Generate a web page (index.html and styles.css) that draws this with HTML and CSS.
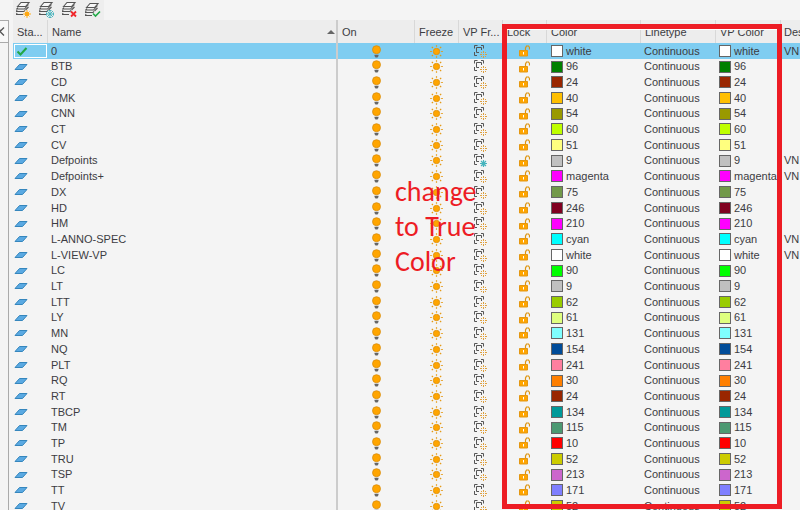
FILE: index.html
```html
<!DOCTYPE html>
<html lang="en">
<head>
<meta charset="utf-8">
<title>Layers</title>
<link rel="stylesheet" href="styles.css">
</head>
<body>
<svg class="defs" aria-hidden="true">
  <symbol id="sheets" viewBox="0 0 16 17">
    <g fill="none" stroke="#555" stroke-width="1.100">
      <path d="M1 9l-.5 1.500H8l1-1M1 12l-.5 1.500H7"/>
      <path d="M2 6.500L.8 8H8.500l4-4.500"/>
      <path d="M9.500 9l3-3"/>
      <path d="M1.500 5.500L5 1.500h8L9.500 5.500z" fill="#f8f8f8"/>
    </g>
  </symbol>
  <symbol id="layer" viewBox="0 0 14 8"><path d="M1 6.500L5.500 1.500h7.500L8.500 6.500z" fill="#5aa9e2" stroke="#3586bd"/></symbol>
  <symbol id="check" viewBox="0 0 12 9"><path d="M1.500 4.500l3 3L10.500 1" fill="none" stroke="#22a845" stroke-width="2"/></symbol>
  <symbol id="bulb" viewBox="0 0 9 13">
    <circle cx="4.500" cy="4.700" r="4" fill="#ffa500" stroke="#d88d0c" stroke-width=".8"/>
    <path d="M2.500 9.800h4v1.200l-1 1.500h-2l-1-1.500z" fill="#666"/>
  </symbol>
  <symbol id="sun" viewBox="0 0 13 13">
    <circle cx="6.500" cy="6.500" r="3.200" fill="#ffa500" stroke="#db9010" stroke-width=".8"/>
    <path d="M6.500 .2v1.600M6.500 11.200v1.600M.2 6.500h1.600M11.200 6.500h1.600M1.800 1.800l1.200 1.200M10 10l1.200 1.200M11.200 1.800L10 3M3 10l-1.200 1.200" stroke="#e59a16" stroke-width="1.200"/>
  </symbol>
  <symbol id="vp" viewBox="0 0 13 13">
    <path d="M.5 3.500v-3h3M7 .5h2.500v3M.5 7v3.500h2.500M5 7.500H2.500v-5h5V5" fill="none" stroke="#555"/>
  </symbol>
  <symbol id="spark" viewBox="0 0 7 7"><path d="M3.500 0v2M3.500 5v2M0 3.500h2M5 3.500h2M1 1l1 1M5 5l1 1M6 1L5 2M2 5L1 6" stroke="#dfa03c"/><path d="M3 3.500h1" stroke="#dfa03c"/></symbol>
  <symbol id="flake" viewBox="0 0 7 7"><path d="M3.500 0v7M0 3.500h7M1 1l5 5M6 1L1 6" stroke="#45b3bc" stroke-width="1.200"/></symbol>
  <symbol id="lock" viewBox="0 0 11 12">
    <path d="M6.500 5.500V3L7.500 1h2l1 1.500v2" fill="none" stroke="#dd940f" stroke-width="1.200"/>
    <path d="M.5 5.500h8v5.500h-8z" fill="#ffa500" stroke="#e39712"/><path d="M4.500 7v2.500" stroke="#fff"/>
  </symbol>
</svg>

<div class="toolbar">
  <button aria-label="New layer"><svg><use href="#sheets" width="16" height="17"/><path d="M11 9v8M7 13h8M8.500 10.500l5 5M13.500 10.500l-5 5" stroke="#ffb01f"/><circle cx="11" cy="13" r="2.200" fill="#ffa812"/></svg></button>
  <button aria-label="New frozen layer"><svg><use href="#sheets" width="16" height="17"/><path d="M11 9v8M7 13h8M8 10l6 6M14 10l-6 6M9.500 9.500h3M9.500 16.500h3M7.500 11.500v3M14.500 11.500v3" stroke="#4bb5be"/></svg></button>
  <button aria-label="Delete layer"><svg><use href="#sheets" width="16" height="17"/><path d="M9 10.500l5 5M14 10.500l-5 5" stroke="#f0262b" stroke-width="1.800"/></svg></button>
  <button aria-label="Set current"><svg><use href="#sheets" y="1" width="16" height="17"/><path d="M8 12.500l2.500 2.500L15 10.500" fill="none" stroke="#22aa48" stroke-width="1.600"/></svg></button>
</div>

<main class="manager">
  <aside class="side">
    <button class="close" aria-label="Close"><svg viewBox="0 0 5 9"><path d="M-1 .5L0 4.500L4 8.500M4 .5L0 4.500" fill="none" stroke="#555" stroke-width="1.300"/></svg></button>
  </aside>
  <div class="list">
    <table>
      <colgroup>
        <col class="c-status"><col class="c-name"><col class="c-on"><col class="c-mid"><col class="c-mid"><col class="c-mid"><col class="c-color"><col class="c-line"><col class="c-vp"><col>
      </colgroup>
      <thead>
        <tr><th>Sta...</th><th class="sorted">Name</th><th>On</th><th>Freeze</th><th>VP Fr...</th><th>Lock</th><th>Color</th><th>Linetype</th><th>VP Color</th><th>Des</th></tr>
      </thead>
      <tbody id="layers"></tbody>
    </table>
    <div class="frame"></div>
    <p class="note">change<br>to True<br>Color</p>
  </div>
</main>
<script src="layers.js"></script>
</body>
</html>
```
FILE: styles.css
```css
* { box-sizing: border-box; }
body {
  margin: 0;
  height: 100vh;
  overflow: hidden;
  display: flex;
  flex-direction: column;
  background: #f4f4f4;
  color: #3c3c42;
  font: 11px/15px "Liberation Sans", Arial, sans-serif;
}
.defs { position: absolute; width: 0; height: 0; }
svg { display: block; }
button { border: 0; padding: 0; background: none; }

.toolbar {
  display: flex;
  gap: 7px;
  flex: none;
  align-self: flex-start;
  height: 20px;
  margin-left: 13px;
  padding: 1px 3px;
  background: #eee;
}
.toolbar svg { width: 16px; height: 18px; }

.manager { flex: 1; min-height: 0; display: flex; gap: 4px; }
.side { width: 9px; border-top: 1px solid #aaa; border-right: 1px solid #aaa; }
.close {
  display: block;
  width: 100%;
  height: 22px;
  border-bottom: 1px solid #aaa;
  background: #f8f8f8;
}
.close svg { width: 5px; height: 9px; }

.list { position: relative; flex: 1; min-width: 0; overflow: hidden; }
table { width: 100%; table-layout: fixed; border-collapse: separate; border-spacing: 0; }
.c-status { width: 35px; }
.c-name { width: 290px; }
.c-on { width: 77px; }
.c-mid { width: 44px; }
.c-color { width: 94px; }
.c-line { width: 75px; }
.c-vp { width: 65px; }
th, td { padding: 0 0 0 3px; white-space: nowrap; text-align: left; font-weight: normal; }
th { height: 23px; padding: 2px 0 0 4px; background: #ededed; border-right: 1px solid #d8d8d8; }
th:last-child { padding-left: 3px; border-right: 0; }
.sorted { position: relative; }
.sorted::after {
  content: "";
  position: absolute;
  right: 1px;
  top: 10px;
  border: 4px solid transparent;
  border-top: 0;
  border-bottom: 4px solid #666;
}
th:nth-child(2), td:nth-child(2) { border-right: 2px solid #ccc; }
tr { height: 16px; }
tbody tr:nth-child(10n+2), tbody tr:nth-child(10n+5), tbody tr:nth-child(10n+8) { height: 15px; }
td:first-child { padding-left: 1px; }
td:nth-child(n+3):nth-child(-n+6) { padding: 0 1px 0 0; }
td:nth-child(n+3):nth-child(-n+6) svg { margin: 0 auto; }
.current td { background: #7fcdf1; }
.current td:first-child { outline: 1px solid #fff; outline-offset: -2px; }
.layer { width: 14px; height: 8px; }
.check { width: 12px; height: 9px; margin-left: 2px; }
.bulb { width: 9px; height: 13px; }
.sun, .vp { width: 13px; height: 13px; }
.lock { width: 11px; height: 12px; }
td:nth-child(7) { padding-left: 4px; }
.color { display: flex; align-items: center; gap: 3px; }
.swatch { flex: none; width: 12px; height: 12px; border: 1px solid #666; }

.frame {
  position: absolute;
  top: 4px;
  bottom: 1px;
  left: 489px;
  width: 280px;
  border: 5px solid #ed1c24;
  box-shadow: inset 0 1px #fff;
}
.note {
  position: absolute;
  top: 154px;
  left: 382px;
  margin: 0;
  color: #ed1c24;
  font: 28px/35px Carlito, Lato, sans-serif;
}
```
FILE: layers.js
```js
const layers = [
  ["0", "white", "#ffffff", "VN"], ["BTB", "96", "#008000"], ["CD", "24", "#992600"],
  ["CMK", "40", "#ffbf00"], ["CNN", "54", "#999900"], ["CT", "60", "#bfff00"],
  ["CV", "51", "#ffff7f"], ["Defpoints", "9", "#c0c0c0", "VN"], ["Defpoints+", "magenta", "#ff00ff", "VN"],
  ["DX", "75", "#729949"], ["HD", "246", "#800020"], ["HM", "210", "#ff00ff"],
  ["L-ANNO-SPEC", "cyan", "#00ffff", "VN"], ["L-VIEW-VP", "white", "#ffffff", "VN"], ["LC", "90", "#00ff00"],
  ["LT", "9", "#c0c0c0"], ["LTT", "62", "#99cc00"], ["LY", "61", "#dfff7f"],
  ["MN", "131", "#7fffff"], ["NQ", "154", "#004c99"], ["PLT", "241", "#ff7f9f"],
  ["RQ", "30", "#ff7f00"], ["RT", "24", "#992600"], ["TBCP", "134", "#009999"],
  ["TM", "115", "#4c9972"], ["TP", "10", "#ff0000"], ["TRU", "52", "#cccc00"],
  ["TSP", "213", "#cc66cc"], ["TT", "171", "#7f7fff"], ["TV", "52", "#cccc00"]
];
const icon = (name) => `<svg class="${name}"><use href="#${name}"/></svg>`;
const viewport = (mark) => `<svg class="vp"><use href="#vp"/><use href="#${mark}" x="6" y="6" width="7" height="7"/></svg>`;
document.getElementById("layers").innerHTML = layers.map(([name, color, value, note = ""], i) => {
  const swatch = `<div class="color"><span class="swatch" style="background:${value}"></span>${color}</div>`;
  return `<tr${i === 0 ? ' class="current"' : ""}><td>${icon(i === 0 ? "check" : "layer")}</td><td>${name}</td>
    <td>${icon("bulb")}</td><td>${icon("sun")}</td><td>${viewport(name === "Defpoints" ? "flake" : "spark")}</td><td>${icon("lock")}</td>
    <td>${swatch}</td><td>Continuous</td><td>${swatch}</td><td>${note}</td></tr>`;
}).join("");
```
